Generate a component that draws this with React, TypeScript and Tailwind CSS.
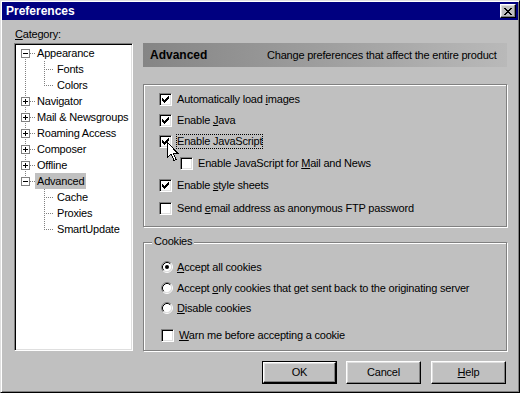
import React from 'react';

function Check() {
  return (
    <svg width="7" height="7" viewBox="0 0 7 7" shapeRendering="crispEdges">
      <path d="M0 2h1v3h-1z M1 3h1v3h-1z M2 4h1v3h-1z M3 3h1v3h-1z M4 2h1v3h-1z M5 1h1v3h-1z M6 0h1v3h-1z" fill="#000" />
    </svg>
  );
}

function Checkbox({ checked }: { checked?: boolean }) {
  return (
    <div className="w-[13px] h-[13px] shrink-0 bg-white border border-t-[#808080] border-l-[#808080] border-r-white border-b-white shadow-[inset_1px_1px_0_#000,inset_-1px_-1px_0_#dfdfdf] flex items-center justify-center">
      {checked && <Check />}
    </div>
  );
}

function Radio({ checked }: { checked?: boolean }) {
  return (
    <svg width="12" height="12" viewBox="0 0 12 12" className="shrink-0">
      <circle cx="6" cy="6" r="4.5" fill="#fff" />
      <path d="M2.11 9.89 A5.5 5.5 0 0 1 9.89 2.11" stroke="#808080" fill="none" />
      <path d="M9.89 2.11 A5.5 5.5 0 0 1 2.11 9.89" stroke="#fff" fill="none" />
      <path d="M2.82 9.18 A4.5 4.5 0 0 1 9.18 2.82" stroke="#000" fill="none" />
      <path d="M9.18 2.82 A4.5 4.5 0 0 1 2.82 9.18" stroke="#dfdfdf" fill="none" />
      {checked && <circle cx="6" cy="6" r="2" fill="#000" />}
    </svg>
  );
}

type TreeRow = {
  label: string;
  child?: boolean;
  expander?: '+' | '-';
  vline?: 'first' | 'mid' | 'last';
  parentLine?: boolean;
  lastChild?: boolean;
  selected?: boolean;
};

const rows: TreeRow[] = [
  { label: 'Appearance', expander: '-', vline: 'first' },
  { label: 'Fonts', child: true, parentLine: true },
  { label: 'Colors', child: true, parentLine: true, lastChild: true },
  { label: 'Navigator', expander: '+', vline: 'mid' },
  { label: 'Mail & Newsgroups', expander: '+', vline: 'mid' },
  { label: 'Roaming Access', expander: '+', vline: 'mid' },
  { label: 'Composer', expander: '+', vline: 'mid' },
  { label: 'Offline', expander: '+', vline: 'mid' },
  { label: 'Advanced', expander: '-', vline: 'last', selected: true },
  { label: 'Cache', child: true },
  { label: 'Proxies', child: true },
  { label: 'SmartUpdate', child: true, lastChild: true },
];

function Gutter({ row }: { row: TreeRow }) {
  const dot = { stroke: '#808080', strokeDasharray: '1 1', fill: 'none' };
  if (row.child) {
    return (
      <svg width="39" height="16" viewBox="0 0 39 16" shapeRendering="crispEdges" className="shrink-0">
        {row.parentLine && <path d="M9.5 0V16" {...dot} />}
        <path d={row.lastChild ? 'M28.5 0V9' : 'M28.5 0V16'} {...dot} />
        <path d="M30 8.5H38" {...dot} />
      </svg>
    );
  }
  const v = row.vline === 'first' ? 'M9.5 8V16' : row.vline === 'last' ? 'M9.5 0V9' : 'M9.5 0V16';
  return (
    <svg width="19" height="16" viewBox="0 0 19 16" shapeRendering="crispEdges" className="shrink-0">
      <path d={v} {...dot} />
      <path d="M14 8.5H19" {...dot} />
      <rect x="5.5" y="4.5" width="8" height="8" fill="#fff" stroke="#808080" />
      <path d="M7 8.5H12" stroke="#000" />
      {row.expander === '+' && <path d="M9.5 6V11" stroke="#000" />}
    </svg>
  );
}

function Btn({ children, isDefault, className = '' }: { children: React.ReactNode; isDefault?: boolean; className?: string }) {
  const bevel =
    'flex-1 flex items-center justify-center border border-t-white border-l-white border-r-black border-b-black shadow-[inset_-1px_-1px_0_#808080,inset_1px_1px_0_#dfdfdf]';
  return (
    <div className={`w-[75px] h-[23px] flex ${isDefault ? 'border border-black' : ''} ${className}`}>
      <div className={bevel}>{children}</div>
    </div>
  );
}

export default function App() {
  return (
    <div className="relative w-[520px] h-[393px] bg-[#c0c0c0] p-[1px] border border-t-[#dfdfdf] border-l-[#dfdfdf] border-r-black border-b-black shadow-[inset_1px_1px_0_#fff,inset_-1px_-1px_0_#808080] font-['Liberation_Sans',Arial,sans-serif] text-[11px] leading-[13px] tracking-[-0.2px] text-black flex flex-col select-none">
      {/* title bar */}
      <div className="h-[18px] bg-[#000080] flex items-center pl-[4px] pr-[2px]">
        <span className="text-white font-bold text-[12px] tracking-normal">Preferences</span>
        <div className="ml-auto w-[16px] h-[14px] flex items-center justify-center bg-[#c0c0c0] border border-t-white border-l-white border-r-black border-b-black shadow-[inset_-1px_-1px_0_#808080,inset_1px_1px_0_#dfdfdf]">
          <svg width="8" height="7" viewBox="0 0 8 7" shapeRendering="crispEdges">
            <path
              d="M0 0h2v1h-2z M6 0h2v1h-2z M1 1h2v1h-2z M5 1h2v1h-2z M2 2h4v1h-4z M3 3h2v1h-2z M2 4h4v1h-4z M1 5h2v1h-2z M5 5h2v1h-2z M0 6h2v1h-2z M6 6h2v1h-2z"
              fill="#000"
            />
          </svg>
        </div>
      </div>

      {/* body */}
      <div className="flex pl-[12px]">
        <div className="flex flex-col w-[119px]">
          <div className="mt-[8px] ml-[1px] h-[13px]">
            <span className="underline">C</span>ategory:
          </div>
          <div className="mt-[2px] h-[308px] bg-white border border-t-[#808080] border-l-[#808080] border-r-white border-b-white shadow-[inset_1px_1px_0_#000,inset_-1px_-1px_0_#dfdfdf] p-[1px]">
            {rows.map((r) => (
              <div key={r.label} className="flex h-[16px] items-center">
                <Gutter row={r} />
                <span className={`px-[2px] leading-[16px] whitespace-nowrap ${r.selected ? 'bg-[#c0c0c0]' : ''}`}>{r.label}</span>
              </div>
            ))}
          </div>
        </div>

        <div className="ml-[10px] w-[364px] flex flex-col pt-[23px]">
          <div className="h-[24px] flex items-center pl-[7px] bg-linear-to-r from-[#858585] to-[#b9b9b9]">
            <span className="w-[117px] font-bold text-[12px] tracking-normal">Advanced</span>
            <span>Change preferences that affect the entire product</span>
          </div>

          <div className="mt-[17px] h-[143px] border border-[#808080] shadow-[inset_1px_1px_0_#fff,1px_1px_0_#fff] pt-[8px] pl-[15px] flex flex-col">
            <div className="flex items-center h-[13px]">
              <Checkbox checked />
              <span className="ml-[5px]">Automatically load <span className="underline">i</span>mages</span>
            </div>
            <div className="flex items-center h-[13px] mt-[8px]">
              <Checkbox checked />
              <span className="ml-[5px]">Enable <span className="underline">J</span>ava</span>
            </div>
            <div className="flex items-center h-[13px] mt-[8px]">
              <Checkbox checked />
              <span className="ml-[5px] outline-1 outline-dotted outline-black">Enable JavaScript</span>
            </div>
            <div className="flex items-center h-[13px] mt-[9px] ml-[21px]">
              <Checkbox />
              <span className="ml-[5px]">Enable JavaScript for <span className="underline">M</span>ail and News</span>
            </div>
            <div className="flex items-center h-[13px] mt-[9px]">
              <Checkbox checked />
              <span className="ml-[5px]">Enable <span className="underline">s</span>tyle sheets</span>
            </div>
            <div className="flex items-center h-[13px] mt-[10px]">
              <Checkbox />
              <span className="ml-[5px]">Send <span className="underline">e</span>mail address as anonymous FTP password</span>
            </div>
          </div>

          <div className="relative mt-[15px] h-[109px] border border-[#808080] shadow-[inset_1px_1px_0_#fff,1px_1px_0_#fff] pt-[18px] pl-[17px] flex flex-col">
            <span className="absolute -top-[8px] left-[8px] px-[2px] bg-[#c0c0c0]">Cookies</span>
            <div className="flex items-center h-[12px]">
              <Radio checked />
              <span className="ml-[4px]"><span className="underline">A</span>ccept all cookies</span>
            </div>
            <div className="flex items-center h-[12px] mt-[9px]">
              <Radio />
              <span className="ml-[4px]">Accept <span className="underline">o</span>nly cookies that get sent back to the originating server</span>
            </div>
            <div className="flex items-center h-[12px] mt-[8px]">
              <Radio />
              <span className="ml-[4px]"><span className="underline">D</span>isable cookies</span>
            </div>
            <div className="flex items-center h-[13px] mt-[15px]">
              <Checkbox />
              <span className="ml-[5px]"><span className="underline">W</span>arn me before accepting a cookie</span>
            </div>
          </div>
        </div>
      </div>

      {/* buttons */}
      <div className="mt-[10px] flex justify-end pr-[12px]">
        <Btn isDefault>OK</Btn>
        <Btn className="ml-[9px]">Cancel</Btn>
        <Btn className="ml-[10px]">
          <span><span className="underline">H</span>elp</span>
        </Btn>
      </div>

      {/* mouse pointer */}
      <svg width="13" height="20" viewBox="0 0 13 20" className="absolute left-[166px] top-[141px]" shapeRendering="crispEdges">
        <polygon points="0.5,0.5 0.5,15.5 4,12 7,18.5 9,17.5 6.5,11.5 11,11.5" fill="#fff" stroke="#000" />
      </svg>
    </div>
  );
}
